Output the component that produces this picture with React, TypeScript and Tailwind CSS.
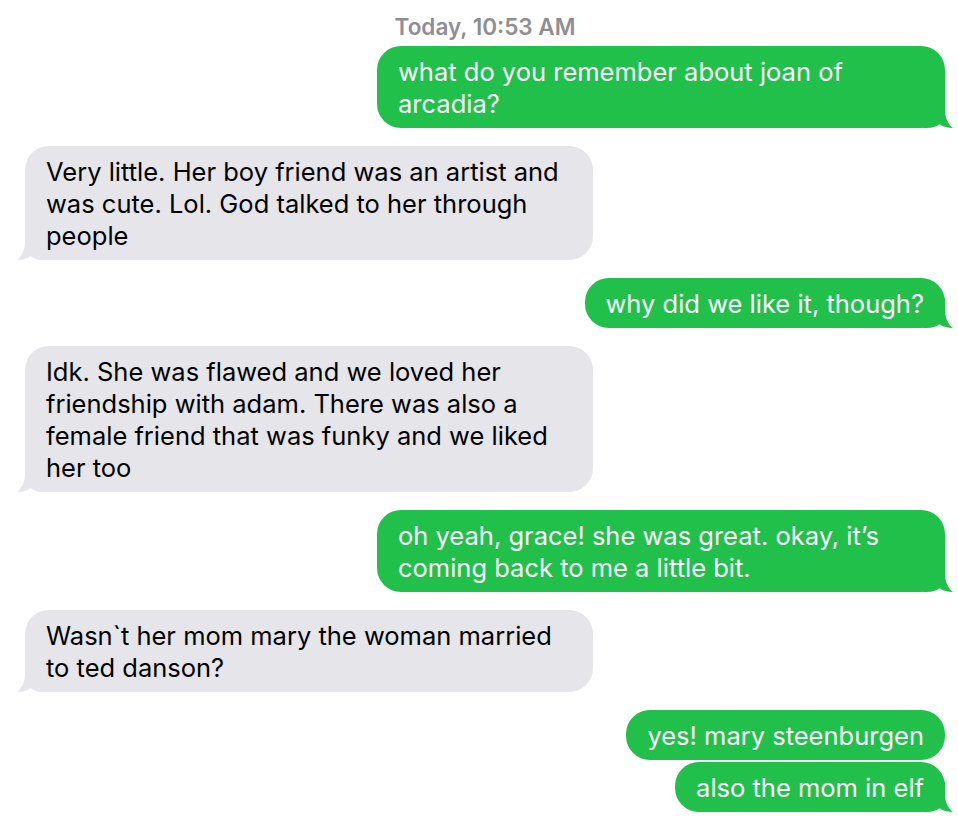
import React from "react";

type Msg = { from: "me" | "them"; lines: string[]; tail?: boolean; gap?: "tight" | "loose" };

const messages: Msg[] = [
  { from: "me", lines: ["what do you remember about joan of", "arcadia?"], tail: true },
  {
    from: "them",
    lines: ["Very little. Her boy friend was an artist and", "was cute. Lol. God talked to her through", "people"],
    tail: true,
  },
  { from: "me", lines: ["why did we like it, though?"], tail: true },
  {
    from: "them",
    lines: [
      "Idk. She was flawed and we loved her",
      "friendship with adam. There was also a",
      "female friend that was funky and we liked",
      "her too",
    ],
    tail: true,
  },
  { from: "me", lines: ["oh yeah, grace! she was great. okay, it\u2019s", "coming back to me a little bit."], tail: true },
  { from: "them", lines: ["Wasn`t her mom mary the woman married", "to ted danson?"], tail: true },
  { from: "me", lines: ["yes! mary steenburgen"] },
  { from: "me", lines: ["also the mom in elf"], tail: true, gap: "tight" },
];

function Tail({ side }: { side: "left" | "right" }) {
  const right = side === "right";
  return (
    <svg
      width="30"
      height="30"
      viewBox="0 0 30 30"
      className={
        right
          ? "absolute -right-[8px] bottom-0 fill-[#21c04b]"
          : "absolute -left-[8px] bottom-0 fill-[#e5e5ea] -scale-x-100"
      }
    >
      <path d="M0 0H22V12C22 20 25 26 30 30C25 30 20 28.8 16.5 26.2C13 28.8 9 30 4 30H0Z" />
    </svg>
  );
}

function Bubble({ msg }: { msg: Msg }) {
  const me = msg.from === "me";
  const multi = msg.lines.length > 1;
  return (
    <div className={`flex ${me ? "justify-end" : "justify-start"} ${msg.gap === "tight" ? "mt-[2px]" : "mt-[18px]"} first:mt-0`}>
      <div
        className={`relative rounded-[24px] px-[21px] pt-[10px] pb-[8px] text-[25.5px] leading-[32px] whitespace-nowrap ${
          multi ? "w-[568px]" : ""
        } ${me ? "bg-[#21c04b] text-white" : "bg-[#e5e5ea] text-black"}`}
      >
        {msg.tail && <Tail side={me ? "right" : "left"} />}
        <div className="relative">
          {msg.lines.map((l, i) => (
            <div key={i}>{l}</div>
          ))}
        </div>
      </div>
    </div>
  );
}

export default function App() {
  return (
    <div
      className="w-[958px] h-[824px] bg-white pl-[25px] pr-[13px] pt-[15px] overflow-hidden"
      style={{ fontFamily: "Inter, 'Liberation Sans', sans-serif" }}
    >
      <div className="text-center text-[22.5px] leading-[24px] font-semibold text-[#8e8e93] mb-[7px]">
        Today, 10:53 AM
      </div>
      <div className="flex flex-col">
        {messages.map((m, i) => (
          <Bubble key={i} msg={m} />
        ))}
      </div>
    </div>
  );
}
